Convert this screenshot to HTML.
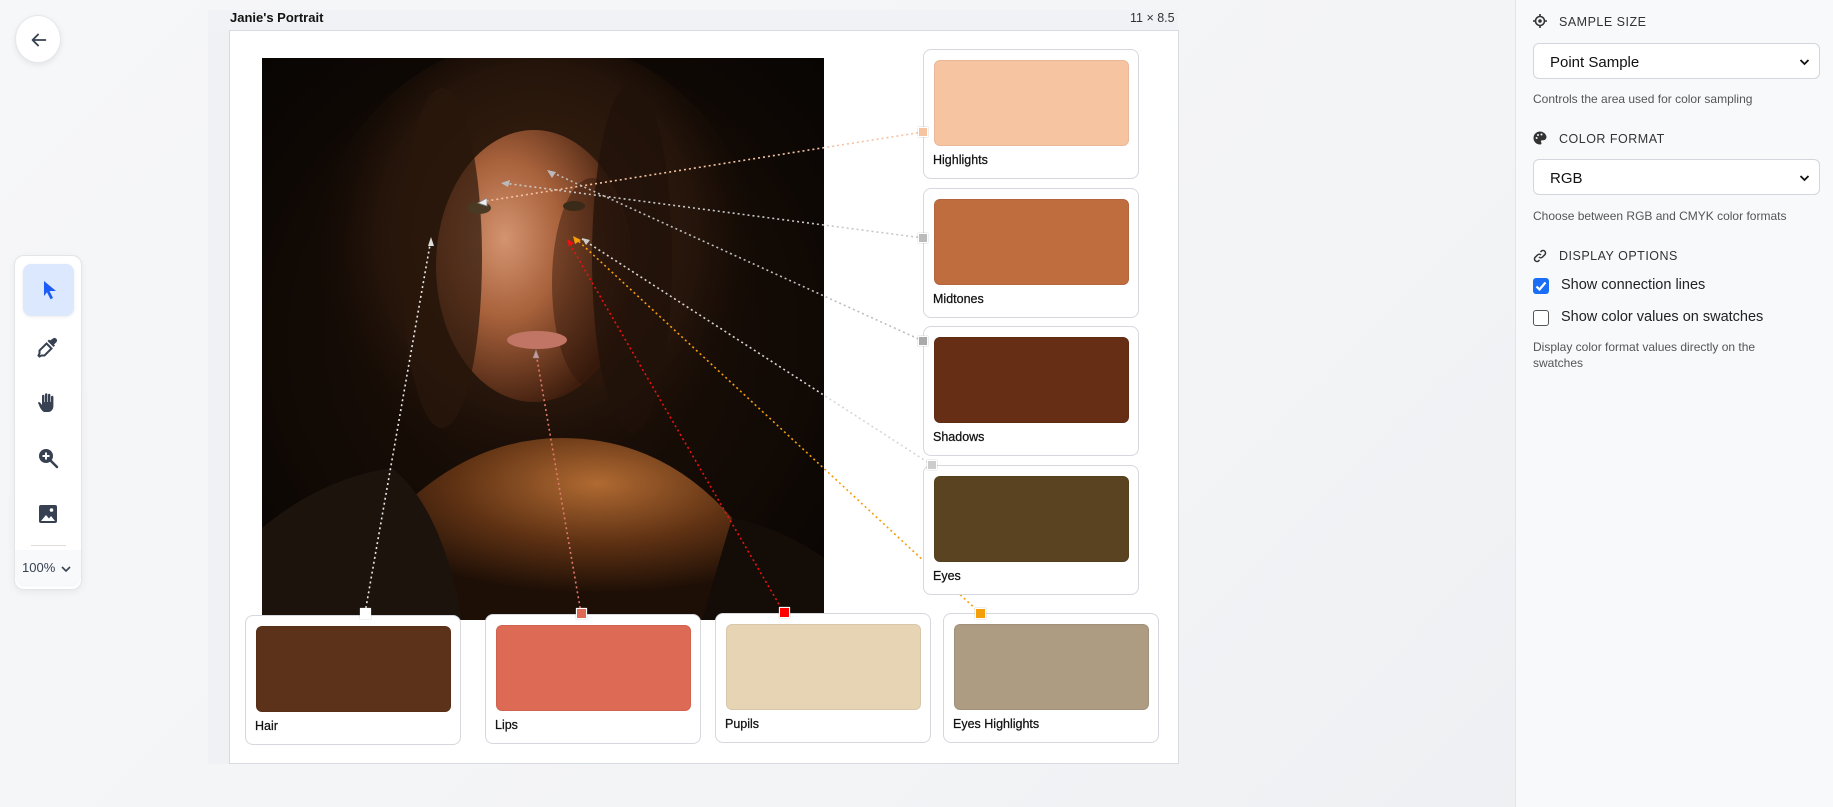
<!DOCTYPE html>
<html><head><meta charset="utf-8"><style>
*{box-sizing:border-box;margin:0;padding:0}
body{width:1833px;height:807px;overflow:hidden;background:linear-gradient(135deg,#f6f7f9 0%,#f3f4f6 60%,#eceef1 100%);font-family:"Liberation Sans",sans-serif;position:relative;color:#1f2937}
.abs{position:absolute}
.card{position:absolute;background:#fff;border:1px solid #d6d8de;border-radius:8px;width:216px;height:130px}
.card .sw{position:absolute;left:10px;top:10px;width:195px;height:86px;border-radius:6px;border:1px solid rgba(0,0,0,.06)}
.card .lb{position:absolute;left:9px;top:103px;font-size:12.5px;color:#111;-webkit-text-stroke:.25px #111}
.panel{position:absolute;left:1515px;top:0;width:318px;height:807px;background:#f8f9fb;border-left:1px solid #e3e5e9}
.h{position:absolute;left:43px;font-size:12.5px;letter-spacing:.5px;color:#333}
.ic{position:absolute;left:17px}
.sel{position:absolute;left:17px;width:287px;height:36px;background:#fff;border:1px solid #d3d6dc;border-radius:6px;font-size:15px;padding:10px 0 0 16px;color:#111}
.sel svg{position:absolute;right:9px;top:14px}
.d{position:absolute;left:17px;font-size:12px;color:#555;line-height:16px}
.cb{position:absolute;left:17px;width:16px;height:16px;border-radius:3px}
.ct{position:absolute;left:45px;font-size:14.5px;color:#222}
.tb{position:absolute;left:14px;top:255px;width:68px;height:335px;background:#fff;border:1px solid #e3e5e9;border-radius:10px;box-shadow:0 2px 8px rgba(0,0,0,.06)}
.ti{position:absolute;left:21px;width:24px;height:24px}
</style></head><body>
<div class="abs" style="left:15px;top:15px;width:46px;height:48px;border-radius:50%;background:#fff;border:1px solid #e5e7eb;box-shadow:0 2px 6px rgba(0,0,0,.08)"><svg class="abs" style="left:12px;top:13px" width="22" height="22" viewBox="0 0 24 24" fill="none" stroke="#374151" stroke-width="2" stroke-linecap="round" stroke-linejoin="round"><path d="M19 12H5M11 6l-6 6 6 6"/></svg></div>

<div class="tb">
<div class="abs" style="left:8px;top:8px;width:51px;height:52px;border-radius:8px;background:#dbe8fd;box-shadow:0 1px 3px rgba(0,0,0,.08)"></div>
<svg class="ti" style="top:22px;left:23px" viewBox="0 0 24 24"><path d="M6 3l12 10h-6.5l3.5 7-2.5 1.2-3.5-7L6 18z" fill="#1d5cf5"/></svg>
<svg class="ti" style="top:79px" viewBox="0 0 24 24" fill="#374151"><path d="M17 3.5a2.5 2.5 0 013.5 3.5l-2.5 2.5 1 1-1.5 1.5-6-6 1.5-1.5 1 1z"/><path d="M10.5 8.5l5 5-7 7H5.5l-2 1-1-1 1-2V15.5z" fill="none" stroke="#374151" stroke-width="2"/></svg>
<svg class="ti" style="top:135px" viewBox="0 0 24 24" fill="#374151"><path d="M8 21c-2-1-4-4-5-7l-1-2c0-1 1.5-1.3 2.3-.3L6 14V5a1.2 1.2 0 012.4 0v6h.6V3.5a1.2 1.2 0 012.4 0V11h.6V4a1.2 1.2 0 012.4 0v7h.6V6a1.2 1.2 0 012.4 0v9c0 3-2 6-5 6z"/></svg>
<svg class="ti" style="top:190px" viewBox="0 0 24 24"><circle cx="10" cy="10" r="7" fill="#374151"/><path d="M15 15l6 6" stroke="#374151" stroke-width="2.5" stroke-linecap="round"/><path d="M10 6.5v7M6.5 10h7" stroke="#fff" stroke-width="2"/></svg>
<svg class="ti" style="top:246px" viewBox="0 0 24 24"><rect x="3" y="3" width="18" height="18" rx="2" fill="#374151"/><path d="M5 19l5-6 3 3.5 2-2.5 4 5z" fill="#fff"/><circle cx="15.5" cy="8" r="1.8" fill="#fff"/></svg>
<div class="abs" style="left:16px;top:289px;width:35px;height:1px;background:#ddd"></div>
<div class="abs" style="left:0;top:294px;width:66px;height:37px;background:#f8f9fb;border-radius:0 0 10px 10px"></div>
<div class="abs" style="left:7px;top:304px;font-size:13px;color:#374151">100%</div>
<svg class="abs" style="left:45px;top:307px" width="12" height="12" viewBox="0 0 12 12" fill="none" stroke="#374151" stroke-width="1.6"><path d="M2 4l4 4 4-4"/></svg>
</div>

<div class="abs" style="left:208px;top:10px;width:970px;height:21px;background:#f1f2f5"></div>
<div class="abs" style="left:208px;top:31px;width:22px;height:733px;background:#f0f1f4"></div>
<div class="abs" style="left:230px;top:10px;font-size:13px;font-weight:bold;color:#111">Janie's Portrait</div>
<div class="abs" style="left:1130px;top:11px;font-size:12.5px;color:#333">11 × 8.5</div>
<div class="abs" style="left:229px;top:30px;width:950px;height:734px;background:#fff;border:1px solid #d8dbe0"></div>

<svg class="abs" style="left:262px;top:58px" width="562" height="562" viewBox="0 0 562 562">
<defs>
<radialGradient id="bg" cx="50%" cy="50%" r="70%"><stop offset="0" stop-color="#21120a"/><stop offset=".6" stop-color="#120a05"/><stop offset="1" stop-color="#080503"/></radialGradient>
<radialGradient id="hair" cx="50%" cy="40%" r="50%"><stop offset="0" stop-color="#3e2412"/><stop offset=".7" stop-color="#24140a"/><stop offset="1" stop-color="#150b05" stop-opacity="0"/></radialGradient>
<radialGradient id="face" cx="35%" cy="40%" r="65%"><stop offset="0" stop-color="#d49470"/><stop offset=".45" stop-color="#a7613b"/><stop offset="1" stop-color="#3e1d0d"/></radialGradient>
<radialGradient id="body" cx="58%" cy="25%" r="60%"><stop offset="0" stop-color="#b06a32"/><stop offset=".55" stop-color="#5e3113"/><stop offset="1" stop-color="#1e0f06"/></radialGradient>
</defs>
<rect width="562" height="562" fill="url(#bg)"/>
<ellipse cx="275" cy="230" rx="230" ry="250" fill="url(#hair)"/>
<path d="M120 470 Q200 380 300 380 Q400 380 470 460 L520 562 H80z" fill="url(#body)"/>
<path d="M0 562 L0 470 Q60 420 130 410 Q180 450 200 562z" fill="#1d130d"/>
<path d="M562 562 L562 500 Q520 470 470 460 L440 562z" fill="#140c07"/>
<ellipse cx="272" cy="208" rx="98" ry="136" fill="url(#face)"/>
<ellipse cx="330" cy="225" rx="40" ry="105" fill="#2e160a" opacity=".45"/>
<ellipse cx="180" cy="200" rx="40" ry="170" fill="#2a170b" opacity=".7"/>
<ellipse cx="370" cy="200" rx="40" ry="175" fill="#20120a" opacity=".75"/>
<ellipse cx="217" cy="150" rx="12" ry="6" fill="#4a3a24"/>
<ellipse cx="312" cy="148" rx="11" ry="5" fill="#3a2a18"/>
<ellipse cx="275" cy="282" rx="30" ry="9" fill="#c07565"/>
</svg>

<svg class="abs" style="left:0;top:0" width="1833" height="807" fill="none" stroke-width="1.6" stroke-dasharray="2 3">
<path d="M923 132 L480 202" stroke="#f3c3a3"/>
<path d="M923 238 L503 183" stroke="#c8c8c8"/>
<path d="M923 341 L549 171" stroke="#bdbdbd"/>
<path d="M932 465 L582 239" stroke="#d6d6d6"/>
<path d="M980 613 L574 237" stroke="#f59e0b"/>
<path d="M784 613 L568 241" stroke="#ee1111"/>
<path d="M581 613 L536 353" stroke="#e07a6a"/>
<path d="M365 613 L431 239" stroke="#e8e8e8"/>
</svg>
<svg class="abs" style="left:0;top:0" width="1833" height="807">
<path d="M478 203l9-5v8z" fill="#eee" stroke="#888" stroke-width=".8"/>
<path d="M501 183l9-3-2 7z" fill="#bbb"/>
<path d="M547 170l9 2-4 6z" fill="#bbb"/>
<path d="M431 237l-3 9h6z" fill="#ddd"/>
<path d="M536 350l-3 8h6z" fill="#c99" stroke="#888" stroke-width=".6"/>
<path d="M567 239l2 8 5-4z" fill="#e11"/>
<path d="M573 236l2 8 6-4z" fill="#f59e0b"/>
<path d="M582 238l4 7 4-5z" fill="#ccc"/>
</svg>

<div class="card" style="left:923px;top:49px"><div class="sw" style="background:#f7c4a2"></div><div class="lb">Highlights</div></div>
<div class="card" style="left:923px;top:188px"><div class="sw" style="background:#bf6c3f"></div><div class="lb">Midtones</div></div>
<div class="card" style="left:923px;top:326px"><div class="sw" style="background:#662e15"></div><div class="lb">Shadows</div></div>
<div class="card" style="left:923px;top:465px"><div class="sw" style="background:#5a4320"></div><div class="lb">Eyes</div></div>
<div class="card" style="left:245px;top:615px"><div class="sw" style="background:#5d321a"></div><div class="lb">Hair</div></div>
<div class="card" style="left:485px;top:614px"><div class="sw" style="background:#dd6a55"></div><div class="lb">Lips</div></div>
<div class="card" style="left:715px;top:613px"><div class="sw" style="background:#e6d4b5"></div><div class="lb">Pupils</div></div>
<div class="card" style="left:943px;top:613px"><div class="sw" style="background:#ad9b82"></div><div class="lb">Eyes Highlights</div></div>

<div class="abs" style="left:918px;top:127px;width:10px;height:10px;background:#f7c4a2;border:1px solid #fff;box-shadow:0 0 1px #aaa"></div>
<div class="abs" style="left:918px;top:233px;width:10px;height:10px;background:#bbb;border:1px solid #fff;box-shadow:0 0 1px #aaa"></div>
<div class="abs" style="left:918px;top:336px;width:10px;height:10px;background:#aaa;border:1px solid #fff;box-shadow:0 0 1px #aaa"></div>
<div class="abs" style="left:927px;top:460px;width:10px;height:10px;background:#ccc;border:1px solid #fff;box-shadow:0 0 1px #aaa"></div>
<div class="abs" style="left:360px;top:608px;width:11px;height:11px;background:#fff;box-shadow:0 0 1px #aaa"></div>
<div class="abs" style="left:576px;top:608px;width:11px;height:11px;background:#dd6a55;border:1px solid #fff;box-shadow:0 0 1px #aaa"></div>
<div class="abs" style="left:779px;top:607px;width:11px;height:11px;background:#f00;border:1px solid #fff;box-shadow:0 0 1px #aaa"></div>
<div class="abs" style="left:975px;top:608px;width:11px;height:11px;background:#f59e0b;border:1px solid #fff;box-shadow:0 0 1px #aaa"></div>

<div class="panel">
<svg class="ic" style="top:14px" width="14" height="14" viewBox="0 0 14 14" fill="none" stroke="#333" stroke-width="1.6"><circle cx="7" cy="7" r="4.5"/><circle cx="7" cy="7" r="1" fill="#333"/><path d="M7 0v2.5M7 11.5V14M0 7h2.5M11.5 7H14"/></svg>
<div class="h" style="top:15px">SAMPLE SIZE</div>
<div class="sel" style="top:43px">Point Sample<svg width="11" height="8" viewBox="0 0 11 8" fill="none" stroke="#111" stroke-width="1.8"><path d="M1.5 2l4 4 4-4"/></svg></div>
<div class="d" style="top:91px">Controls the area used for color sampling</div>
<svg class="ic" style="top:131px" width="14" height="14" viewBox="0 0 14 14"><path d="M7 0.5a6.5 6.5 0 000 13c1 0 1.5-.6 1.5-1.3 0-.8-.6-1-.6-1.7 0-.7.6-1.2 1.3-1.2h1.5A3.3 3.3 0 0013.5 6 6.5 6.5 0 007 .5z" fill="#333"/><circle cx="3.6" cy="7" r="1" fill="#f8f9fb"/><circle cx="5" cy="4" r="1" fill="#f8f9fb"/><circle cx="8.5" cy="3.5" r="1" fill="#f8f9fb"/></svg>
<div class="h" style="top:132px">COLOR FORMAT</div>
<div class="sel" style="top:159px">RGB<svg width="11" height="8" viewBox="0 0 11 8" fill="none" stroke="#111" stroke-width="1.8"><path d="M1.5 2l4 4 4-4"/></svg></div>
<div class="d" style="top:208px">Choose between RGB and CMYK color formats</div>
<svg class="ic" style="top:249px" width="14" height="14" viewBox="0 0 14 14" fill="none" stroke="#333" stroke-width="1.5"><path d="M6 8a2.5 2.5 0 003.5 0l2.5-2.5a2.5 2.5 0 00-3.5-3.5L7.5 3"/><path d="M8 6a2.5 2.5 0 00-3.5 0L2 8.5A2.5 2.5 0 005.5 12l1-1"/></svg>
<div class="h" style="top:249px">DISPLAY OPTIONS</div>
<div class="cb" style="top:278px;background:#1a6ef5"><svg width="16" height="16" viewBox="0 0 16 16" fill="none" stroke="#fff" stroke-width="2.2"><path d="M3.5 8.5l3 3 6-7"/></svg></div>
<div class="ct" style="top:277px">Show connection lines</div>
<div class="cb" style="top:310px;background:#fff;border:1px solid #555"></div>
<div class="ct" style="top:309px">Show color values on swatches</div>
<div class="d" style="top:339px">Display color format values directly on the<br>swatches</div>
</div>
</body></html>
